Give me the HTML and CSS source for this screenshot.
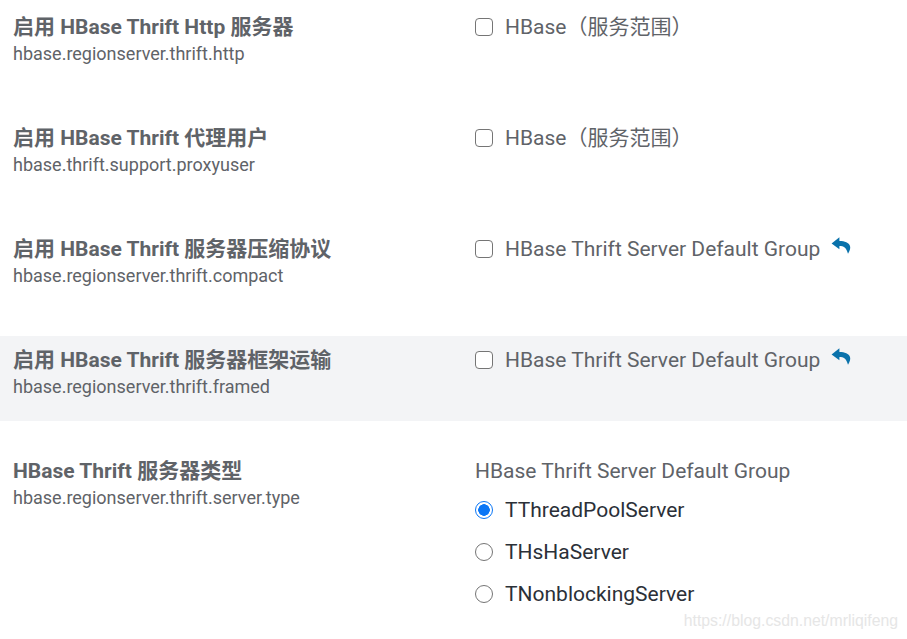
FILE: index.html
```html
<!DOCTYPE html>
<html lang="en">
<head>
  <meta charset="UTF-8">
  <title>HBase Thrift</title>
  <link rel="stylesheet" href="styles.css">
</head>
<body>
  <div class="config-row">
    <div class="config-name">
      <div class="title">启用 HBase Thrift Http 服务器</div>
      <div class="key">hbase.regionserver.thrift.http</div>
    </div>
    <div class="config-value">
      <label class="check"><span class="box"></span><span>HBase（服务范围）</span></label>
    </div>
  </div>

  <div class="config-row">
    <div class="config-name">
      <div class="title">启用 HBase Thrift 代理用户</div>
      <div class="key">hbase.thrift.support.proxyuser</div>
    </div>
    <div class="config-value">
      <label class="check"><span class="box"></span><span>HBase（服务范围）</span></label>
    </div>
  </div>

  <div class="config-row">
    <div class="config-name">
      <div class="title">启用 HBase Thrift 服务器压缩协议</div>
      <div class="key">hbase.regionserver.thrift.compact</div>
    </div>
    <div class="config-value">
      <label class="check"><span class="box"></span><span>HBase Thrift Server Default Group</span>
        <svg class="undo" width="20" height="17" viewBox="0 0 20 17"><path d="M8.4 0.3 L0.6 6.5 L8.4 12.2 V8.9 C12.6 8.9 15.4 10.3 17 16.8 C18.9 13.6 19.7 11.2 19 9 C17.9 5.4 13.8 3.9 8.4 3.9 Z" fill="#0a72ab"/></svg>
      </label>
    </div>
  </div>

  <div class="config-row active">
    <div class="config-name">
      <div class="title">启用 HBase Thrift 服务器框架运输</div>
      <div class="key">hbase.regionserver.thrift.framed</div>
    </div>
    <div class="config-value">
      <label class="check"><span class="box"></span><span>HBase Thrift Server Default Group</span>
        <svg class="undo" width="20" height="17" viewBox="0 0 20 17"><path d="M8.4 0.3 L0.6 6.5 L8.4 12.2 V8.9 C12.6 8.9 15.4 10.3 17 16.8 C18.9 13.6 19.7 11.2 19 9 C17.9 5.4 13.8 3.9 8.4 3.9 Z" fill="#0a72ab"/></svg>
      </label>
    </div>
  </div>

  <div class="config-row">
    <div class="config-name">
      <div class="title">HBase Thrift 服务器类型</div>
      <div class="key">hbase.regionserver.thrift.server.type</div>
    </div>
    <div class="config-value">
      <div class="group-name">HBase Thrift Server Default Group</div>
      <label class="radio"><span class="dot checked"></span><span>TThreadPoolServer</span></label>
      <label class="radio"><span class="dot"></span><span>THsHaServer</span></label>
      <label class="radio"><span class="dot"></span><span>TNonblockingServer</span></label>
    </div>
  </div>

  <div class="watermark">https://blog.csdn.net/mrliqifeng</div>
</body>
</html>
```

FILE: styles.css
```css
html, body {
  height: 100%;
}

body {
  margin: 0;
  padding-top: 3px;
  box-sizing: border-box;
  height: 639px;
  overflow: hidden;
  position: relative;
  font-family: Roboto, "Noto Sans CJK SC", sans-serif;
  color: #5f6368;
  background: #fff;
}

.config-row {
  display: flex;
  min-height: 85px;
  margin-bottom: 26px;
  padding: 11px 0 0 13px;
  box-sizing: border-box;
}

.config-row.active {
  background: #f3f4f6;
}

.config-name {
  width: 462px;
  flex: none;
}

.title {
  font-size: 21px;
  font-weight: 700;
  line-height: 27px;
}

.key {
  font-size: 18px;
  line-height: 26px;
}

.config-value {
  flex: 1;
  font-size: 21px;
  line-height: 27px;
}

.check {
  display: flex;
  align-items: center;
}

.box {
  flex: none;
  box-sizing: border-box;
  width: 18px;
  height: 18px;
  margin: 0 12px 2px 0;
  border: 1.5px solid #757575;
  border-radius: 4px;
  background: #fff;
}

.undo {
  margin: -9px 0 0 11px;
}

.group-name {
  margin-bottom: 12px;
}

.radio {
  display: flex;
  align-items: center;
  height: 27px;
  margin-bottom: 15px;
  color: #2b3038;
}

.dot {
  flex: none;
  box-sizing: border-box;
  width: 18px;
  height: 18px;
  margin: 0 12px 2px 0;
  border: 1.5px solid #757575;
  border-radius: 50%;
  background: #fff;
}

.dot.checked {
  border-color: #0a76f6;
  background: radial-gradient(circle, #0a76f6 0 5.5px, #fff 6px);
}

.watermark {
  position: absolute;
  right: 9px;
  bottom: 9px;
  font-family: "Liberation Sans", sans-serif;
  font-size: 15.8px;
  color: #e6e6e6;
}
```
